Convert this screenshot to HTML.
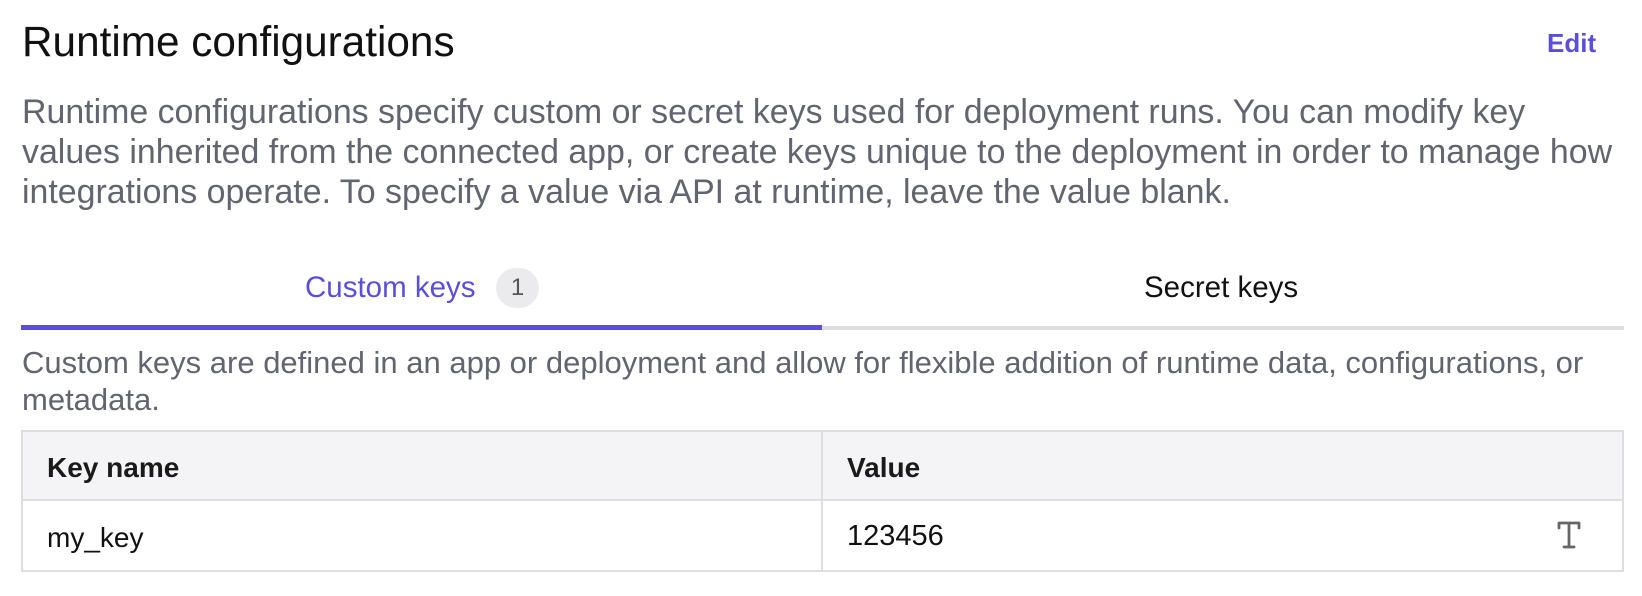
<!DOCTYPE html>
<html><head><meta charset="utf-8"><style>
*{margin:0;padding:0;box-sizing:border-box}
body{width:1642px;height:596px;background:#fff;font-family:"Liberation Sans",sans-serif;position:relative;overflow:hidden}
.a{position:absolute;white-space:nowrap}
</style></head><body>
<div class="a" style="left:22px;top:20px;font-size:42.3px;color:#111;line-height:44px">Runtime configurations</div>
<div class="a" style="left:1547px;top:26px;font-size:26px;font-weight:bold;color:#5b4fd9;line-height:34px">Edit</div>
<div class="a" style="left:22px;top:92px;font-size:33.9px;color:#62646f;line-height:40px">Runtime configurations specify custom or secret keys used for deployment runs. You can modify key<br>values inherited from the connected app, or create keys unique to the deployment in order to manage how<br>integrations operate. To specify a value via API at runtime, leave the value blank.</div>
<div class="a" style="left:21px;top:326px;width:1603px;height:4px;background:#dcdcde"></div>
<div class="a" style="left:21px;top:325px;width:801px;height:5px;background:#5b4fd9"></div>
<div class="a" style="left:305px;top:271px;font-size:29.5px;color:#5b4fd9;line-height:34px">Custom keys</div>
<div class="a" style="left:496px;top:268px;width:43px;height:40px;border-radius:20px;background:#ebebed;color:#555;font-size:24px;line-height:40px;text-align:center">1</div>
<div class="a" style="left:1144px;top:271px;font-size:29.5px;color:#111;line-height:34px">Secret keys</div>
<div class="a" style="left:22px;top:344px;font-size:31px;color:#62646f;line-height:37px">Custom keys are defined in an app or deployment and allow for flexible addition of runtime data, configurations, or<br>metadata.</div>
<div class="a" style="left:21px;top:430px;width:1603px;height:142px;border:2px solid #dedee0"></div>
<div class="a" style="left:23px;top:432px;width:1599px;height:69px;background:#f4f4f6;border-bottom:2px solid #dedee0"></div>
<div class="a" style="left:821px;top:432px;width:2px;height:138px;background:#dedee0"></div>
<div class="a" style="left:47px;top:451px;font-size:28px;font-weight:bold;color:#1a1a1a;line-height:34px">Key name</div>
<div class="a" style="left:847px;top:451px;font-size:28px;font-weight:bold;color:#1a1a1a;line-height:34px">Value</div>
<div class="a" style="left:47px;top:521px;font-size:28px;color:#111;line-height:34px">my_key</div>
<div class="a" style="left:847px;top:519px;font-size:29px;color:#111;line-height:34px">123456</div>
<svg class="a" style="left:1556px;top:520px" width="26" height="30" viewBox="0 0 26 30"><path d="M3 8V3h20v5M13 3v24M8 27h10" fill="none" stroke="#666" stroke-width="2.8" stroke-linecap="round" stroke-linejoin="round"/></svg>
</body></html>
